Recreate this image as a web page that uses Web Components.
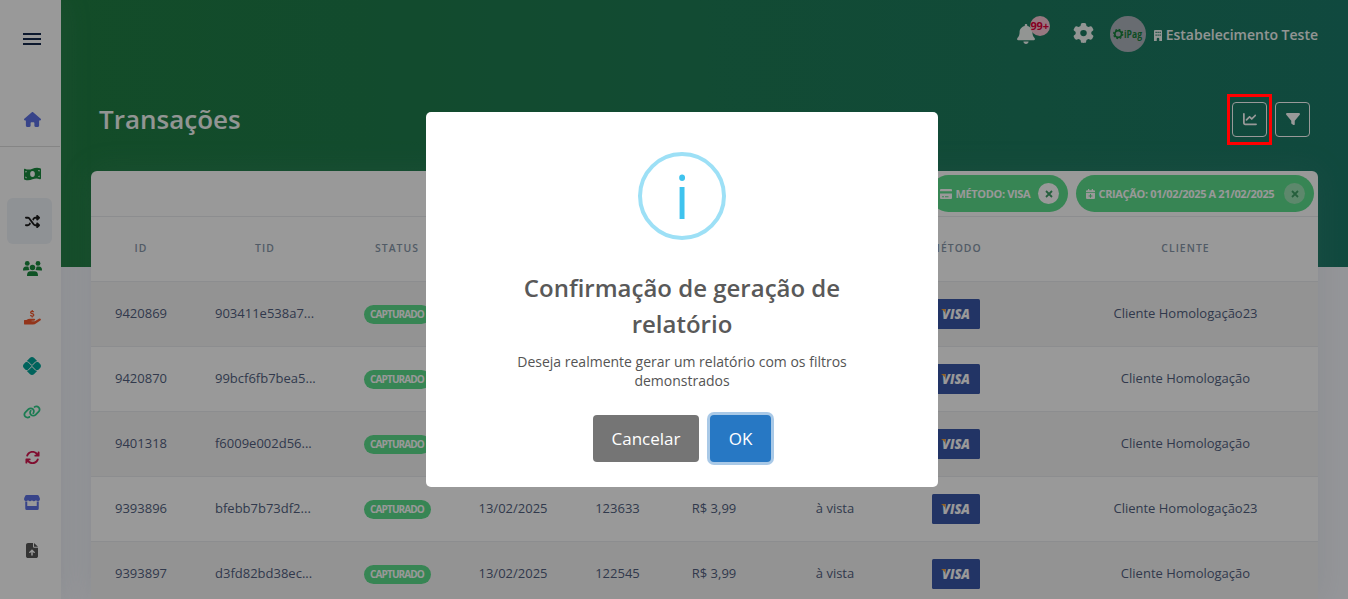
<!DOCTYPE html>
<html lang="pt-BR">
<head>
<meta charset="utf-8">
<title>Transações</title>
<style>
  html, body {
    margin: 0;
    height: 100%;
    overflow: hidden;
  }
  body {
    font-family: "Open Sans", "Noto Sans", sans-serif;
    font-size: 14px;
    color: #525f7f;
    background: #f8f9fe;
  }
</style>
</head>
<body>
<transactions-page></transactions-page>

<script>
const ICONS = {
  menu: ['0 0 18 12', '<path d="M0 0h18v2H0zM0 5h18v2H0zM0 10h18v2H0z"/>'],
  home: ['0 0 576 512', '<path d="M575.8 255.5c0 18-15 32.1-32 32.1h-32l.7 160.2c0 2.7-.2 5.4-.5 8.1V472c0 22.1-17.9 40-40 40H456c-1.1 0-2.2 0-3.3-.1c-1.4 .1-2.8 .1-4.2 .1H416 392c-22.1 0-40-17.9-40-40V448 384c0-17.7-14.3-32-32-32H256c-17.7 0-32 14.3-32 32v64 24c0 22.1-17.9 40-40 40H160 128.1c-1.5 0-3-.1-4.5-.2c-1.2 .1-2.4 .2-3.6 .2H104c-22.1 0-40-17.9-40-40V360c0-.9 0-1.9 .1-2.8V287.6H32c-18 0-32-14-32-32.1c0-9 3-17 10-24L266.4 8c7-7 15-8 22-8s15 2 21 7L564.8 231.5c8 7 12 15 11 24z"/>'],
  money: ['0 0 36 28', '<path fill-rule="evenodd" d="M2 3.500C8 6.500 13 5 18 3.300S28 .5 34.500 2.500Q36 3 36 4.500V22.500Q36 25 33.500 24.500C28 22.500 23 23 18 24.700S8 27.500 1.500 25.500Q0 25 0 23.500V5Q0 2.700 2 3.500ZM18 8a5 6 0 1 0 0 12a5 6 0 1 0 0-12ZM3 8V11Q6 11 6 8.300ZM3 22V19Q5.500 19 6 22.500ZM33 6V9Q30 9 30 6ZM33 20.500V17Q30.500 17 30 20.200Z"/>'],
  shuffle: ['0 0 512 512', '<path d="M403.8 34.4c12-5 25.700-2.200 34.900 6.900l64 64c6 6 9.400 14.100 9.400 22.600s-3.400 16.600-9.400 22.600l-64 64c-9.200 9.200-22.900 11.900-34.900 6.900s-19.800-16.600-19.800-29.600V160H352c-10.100 0-19.600 4.700-25.600 12.800L284 229.300 244 176l31.200-41.600C293.300 110.200 321.800 96 352 96h32V64c0-12.900 7.800-24.600 19.800-29.600zM164 282.700L204 336l-31.200 41.600C154.700 401.800 126.200 416 96 416H32c-17.700 0-32-14.300-32-32s14.300-32 32-32H96c10.100 0 19.600-4.700 25.600-12.800L164 282.700zm274.600 188c-9.200 9.200-22.900 11.900-34.900 6.900s-19.800-16.600-19.800-29.600V416H352c-30.200 0-58.700-14.200-76.800-38.400L121.600 172.800c-6-8.100-15.500-12.800-25.600-12.800H32c-17.700 0-32-14.300-32-32s14.300-32 32-32H96c30.200 0 58.700 14.200 76.800 38.400L326.400 339.200c6 8.100 15.500 12.800 25.600 12.800h32V320c0-12.900 7.800-24.600 19.800-29.600s25.700-2.200 34.900 6.900l64 64c6 6 9.400 14.100 9.400 22.600s-3.400 16.600-9.400 22.600l-64 64z"/>'],
  users: ['0 0 38 30', '<circle cx="8.500" cy="4.800" r="4.800"/><circle cx="30" cy="4.800" r="4.800"/><circle cx="19" cy="13" r="5.500"/><path d="M0 18Q0 11 6 11H9.500Q11.500 11 11.300 13Q11.500 15.500 13 17.500Q12 19 0 18.800ZM38 18Q38 11 32 11H28.500Q26.500 11 26.700 13Q26.500 15.500 25 17.500Q26 19 38 18.800ZM8 29Q8 20.500 15 20.500H23Q30 20.500 30 29Q30 30 29 30H9Q8 30 8 29Z"/>'],
  hand: ['0 0 36 32', '<path d="M21 4.500C20 2.500 14.500 2 14.500 5.200C14.500 8.500 21.300 6.800 21.300 10.500C21.300 13.800 15.500 13.500 14 11M17.900 0V3M17.900 13V16" transform="translate(-.5 0)" fill="none" stroke="currentColor" stroke-width="2.600"/><path d="M0 22.500Q0 21.500 1 21.500H5Q9 18.500 13 18.500H21.500Q24 18.800 23.600 21Q23 22.800 20.500 22.800H16V24H23L31.500 18.500Q34 17.300 35.500 19Q36.500 21 34.500 22.500L26 28.500Q23 31 19 31H1Q0 31 0 30Z"/>'],
  pix: ['0 0 512 512', '<path d="M242.400 292.500C247.800 287.100 257.100 287.100 262.500 292.500L339.500 369.500C353.700 383.700 372.600 391.500 392.600 391.500H407.700L310.600 488.600C280.300 518.100 231.100 518.100 200.800 488.600L103.300 391.200H112.600C132.600 391.200 151.500 383.400 165.700 369.200L242.400 292.500zM262.500 218.900C256.100 224.400 247.900 224.500 242.400 218.900L165.700 142.200C151.500 127.100 132.600 120.200 112.600 120.200H103.300L200.700 22.800C231.100-7.600 280.300-7.600 310.600 22.800L407.800 119.900H392.600C372.600 119.900 353.700 127.700 339.500 141.900L262.500 218.900zM112.600 142.700C126.400 142.700 139.100 148.300 149.700 158.100L226.400 234.800C233.600 241.100 243 245.600 252.500 245.600C261.900 245.600 271.300 241.100 278.500 234.800L355.500 157.800C365.300 148.100 378.800 142.500 392.600 142.500H430.300L488.600 200.800C518.900 231.100 518.900 280.300 488.600 310.600L430.300 368.900H392.600C378.800 368.900 365.300 363.300 355.500 353.500L278.500 276.500C264.600 262.600 240.300 262.600 226.400 276.600L149.700 353.200C139.100 363 126.400 368.600 112.600 368.600H80.800L22.800 310.600C-7.600 280.300-7.600 231.100 22.800 200.800L80.800 142.700H112.600z"/>'],
  link: ['0 0 640 512', '<path d="M579.8 267.700c56.500-56.500 56.500-148 0-204.500c-50-50-128.800-56.500-186.300-15.400l-1.600 1.100c-14.400 10.300-17.700 30.300-7.400 44.600s30.300 17.700 44.600 7.400l1.600-1.100c32.100-22.900 76-19.300 103.800 8.600c31.500 31.500 31.500 82.500 0 114L422.300 334.800c-31.500 31.500-82.500 31.500-114 0c-27.900-27.900-31.500-71.800-8.600-103.800l1.100-1.600c10.300-14.400 6.900-34.400-7.400-44.600s-34.400-6.900-44.600 7.400l-1.100 1.600C206.500 251.200 213 330 263 380c56.500 56.500 148 56.500 204.500 0L579.800 267.700zM60.200 244.300c-56.500 56.500-56.500 148 0 204.500c50 50 128.800 56.500 186.300 15.400l1.600-1.100c14.400-10.300 17.700-30.300 7.400-44.600s-30.300-17.700-44.600-7.400l-1.600 1.100c-32.100 22.900-76 19.300-103.800-8.600C74 372 74 321 105.500 289.500L217.700 177.200c31.500-31.500 82.500-31.500 114 0c27.900 27.900 31.500 71.800 8.600 103.900l-1.100 1.600c-10.300 14.400-6.900 34.400 7.400 44.600s34.400 6.900 44.600-7.400l1.100-1.600C433.500 260.800 427 182 377 132c-56.500-56.500-148-56.500-204.500 0L60.200 244.300z"/>'],
  rotate: ['0 0 512 512', '<path d="M105.100 202.600c7.700-21.800 20.200-42.300 37.800-59.800c62.500-62.500 163.800-62.500 226.300 0L386.300 160H352c-17.700 0-32 14.300-32 32s14.300 32 32 32H463.900c17.700 0 32-14.300 32-32V80c0-17.700-14.300-32-32-32s-32 14.300-32 32v35.200L414.400 97.600c-87.500-87.500-229.300-87.500-316.800 0C73.200 122 55.600 150.700 44.800 181.400c-5.900 16.700 2.900 34.900 19.500 40.800s34.900-2.900 40.800-19.500zM39 289.300c-5 1.500-9.800 4.200-13.700 8.200c-4 4-6.700 8.800-8.100 14c-.3 1.200-.6 2.500-.8 3.800c-.3 1.700-.4 3.400-.4 5.100V432c0 17.700 14.300 32 32 32s32-14.300 32-32V396.900l17.600 17.500c87.500 87.400 229.300 87.400 316.700 0c24.400-24.400 42.100-53.100 52.900-83.700c5.900-16.700-2.900-34.900-19.500-40.800s-34.900 2.900-40.800 19.500c-7.700 21.800-20.200 42.300-37.800 59.800c-62.500 62.500-163.800 62.500-226.300 0L125.600 352H160c17.700 0 32-14.300 32-32s-14.300-32-32-32H48.400c-1.600 0-3.200 .1-4.800 .3s-3.100 .5-4.600 1z"/>'],
  store: ['0 0 32 30', '<path d="M5 0H27Q28.500 0 29.200 1.200L31.500 6Q33 11 28.500 12Q25.500 12.500 23.800 10.500Q22 12.500 19.800 12.500T16 10.500Q14 12.500 12 12.500T8.200 10.500Q6.500 12.500 3.500 12Q-1 11 .5 6L2.800 1.200Q3.500 0 5 0Z"/><path d="M2.500 12.500Q5 13.500 6.500 13V22H25.500V13Q27.500 13.500 29.500 12.500V27Q29.500 30 26.500 30H5.500Q2.500 30 2.500 27Z"/>'],
  file: ['0 0 384 512', '<path d="M64 0C28.700 0 0 28.700 0 64V448c0 35.300 28.700 64 64 64H320c35.300 0 64-28.700 64-64V160H256c-17.700 0-32-14.300-32-32V0H64zM256 0V128H384L256 0zM216 408c0 13.300-10.700 24-24 24s-24-10.700-24-24V305.900l-31 31c-9.400 9.400-24.600 9.400-33.900 0s-9.400-24.600 0-33.900l72-72c9.400-9.400 24.600-9.400 33.900 0l72 72c9.400 9.400 9.400 24.600 0 33.900s-24.600 9.400-33.900 0l-31-31V408z"/>'],
  bell: ['0 0 448 512', '<path d="M224 0c-17.700 0-32 14.300-32 32V51.200C119 66 64 130.600 64 208v18.800c0 47-17.300 92.400-48.500 127.600l-7.400 8.300c-8.400 9.400-10.400 22.900-5.300 34.400S19.400 416 32 416H416c12.600 0 24-7.400 29.200-18.900s3.100-25-5.300-34.400l-7.400-8.300C401.300 319.200 384 273.900 384 226.800V208c0-77.400-55-142-128-156.800V32c0-17.700-14.300-32-32-32zm45.300 493.300c12-12 18.700-28.300 18.700-45.300H224 160c0 17 6.700 33.300 18.700 45.300s28.300 18.700 45.300 18.700s33.300-6.700 45.300-18.700z"/>'],
  gear: ['0 0 512 512', '<path d="M495.900 166.600c3.200 8.700 .5 18.400-6.400 24.600l-43.300 39.400c1.100 8.300 1.700 16.800 1.700 25.400s-.6 17.100-1.700 25.400l43.300 39.400c6.900 6.200 9.600 15.900 6.400 24.600c-4.400 11.900-9.700 23.300-15.800 34.300l-4.700 8.100c-6.600 11-14 21.400-22.100 31.200c-5.900 7.200-15.700 9.600-24.500 6.800l-55.700-17.700c-13.400 10.300-28.200 18.900-44 25.400l-12.500 57.100c-2 9.100-9 16.300-18.200 17.800c-13.800 2.300-28 3.500-42.500 3.500s-28.700-1.200-42.500-3.500c-9.200-1.500-16.200-8.700-18.200-17.800l-12.500-57.100c-15.800-6.500-30.600-15.100-44-25.400L83.100 425.900c-8.800 2.800-18.600 .3-24.500-6.800c-8.100-9.800-15.500-20.200-22.100-31.200l-4.700-8.100c-6.100-11-11.400-22.400-15.800-34.300c-3.200-8.700-.5-18.400 6.400-24.600l43.300-39.400C64.600 273.100 64 264.600 64 256s.6-17.100 1.700-25.400L22.400 191.200c-6.900-6.200-9.600-15.900-6.400-24.600c4.400-11.900 9.700-23.300 15.800-34.300l4.700-8.100c6.600-11 14-21.400 22.100-31.200c5.900-7.200 15.700-9.600 24.500-6.800l55.700 17.700c13.400-10.300 28.200-18.900 44-25.400l12.500-57.100c2-9.100 9-16.300 18.200-17.800C227.300 1.200 241.500 0 256 0s28.700 1.200 42.500 3.500c9.200 1.500 16.200 8.700 18.200 17.800l12.500 57.100c15.800 6.500 30.600 15.100 44 25.400l55.700-17.700c8.800-2.800 18.600-.3 24.500 6.800c8.100 9.800 15.500 20.200 22.100 31.200l4.700 8.100c6.100 11 11.400 22.400 15.800 34.300zM256 336a80 80 0 1 0 0-160 80 80 0 1 0 0 160z"/>'],
  building: ['0 0 16 22', '<path fill-rule="evenodd" d="M2 0H14Q16 0 16 2V22H10.500V17.500Q10.500 15.500 8 15.500T5.500 17.500V22H0V2Q0 0 2 0ZM3 3.500V6H5.500V3.500ZM7 3.500V6H9.500V3.500ZM11 3.500V6H13.500V3.500ZM3 9V11.500H5.500V9ZM7 9V11.500H9.500V9ZM11 9V11.500H13.500V9Z"/>'],
  chart: ['0 0 512 512', '<path d="M64 64c0-17.700-14.300-32-32-32S0 46.300 0 64V400c0 44.200 35.800 80 80 80H480c17.700 0 32-14.300 32-32s-14.300-32-32-32H80c-8.800 0-16-7.200-16-16V64zm406.600 86.600c12.500-12.500 12.500-32.800 0-45.300s-32.800-12.500-45.300 0L320 210.700l-57.400-57.400c-12.500-12.500-32.800-12.500-45.300 0l-112 112c-12.500 12.500-12.500 32.800 0 45.300s32.800 12.500 45.300 0L240 221.300l57.400 57.400c12.500 12.500 32.800 12.500 45.300 0l128-128z"/>'],
  filter: ['0 0 512 512', '<path d="M3.900 54.900C10.500 40.900 24.500 32 40 32H472c15.500 0 29.500 8.900 36.100 22.900s4.600 30.500-5.200 42.500L320 320.900V448c0 12.100-6.800 23.200-17.700 28.600s-23.800 4.300-33.500-3l-64-48c-8.100-6-12.800-15.500-12.800-25.600V320.900L9 97.300C-.7 85.400-2.800 68.800 3.900 54.900z"/>'],
  card: ['0 0 24 18', '<path fill-rule="evenodd" d="M2 0H22Q24 0 24 2V4H0V2Q0 0 2 0ZM0 8H24V16Q24 18 22 18H2Q0 18 0 16ZM4 13V15H8V13ZM10 13V15H17V13Z"/>'],
  calendar: ['0 0 18 20', '<path fill-rule="evenodd" d="M4 0H6.500V2.500H11.500V0H14V2.500H16Q18 2.500 18 4.500V6.500H0V4.500Q0 2.500 2 2.500H4ZM0 8H18V18Q18 20 16 20H2Q0 20 0 18ZM8 10V12.800H5.200V14.800H8V17.600H10V14.800H12.800V12.800H10V10Z"/>'],
  close: ['0 0 8 8', '<path d="M1 1L7 7M7 1L1 7" fill="none" stroke="currentColor" stroke-width="1.800"/>']
};

class UiIcon extends HTMLElement {
  connectedCallback() {
    const [viewBox, shape] = ICONS[this.getAttribute('name')];
    const w = this.getAttribute('w');
    const h = this.getAttribute('h');
    this.attachShadow({ mode: 'open' });
    this.shadowRoot.innerHTML = `
      <style>
        :host { display: inline-flex; flex: none; }
        svg { display: block; fill: currentColor; overflow: visible; }
      </style>
      <svg width="${w}" height="${h}" viewBox="${viewBox}" preserveAspectRatio="none">${shape}</svg>
    `;
  }
}

class SideNav extends HTMLElement {
  connectedCallback() {
    this.attachShadow({ mode: 'open' });
    this.shadowRoot.innerHTML = `
      <style>
        :host {
          display: flex;
          flex-direction: column;
          box-sizing: border-box;
          height: 599px;
          background: #fff;
          padding-left: 7px;
          width: 61px;
          box-shadow: 0 0 32px rgba(136, 152, 170, .15);
          position: relative;
          z-index: 1;
        }
        .item {
          flex: none;
          width: 45px;
          height: 46px;
          border-radius: 6px;
          display: flex;
          align-items: center;
          justify-content: center;
          padding-left: 5px;
          box-sizing: border-box;
        }
        .menu { margin-top: 16px; color: #172b4d; }
        .home { margin-top: 34px; color: #5e72e4; }
        hr { border: 0; height: 1px; background: #dedede; margin: 4px 0 4px -7px; width: 60px; flex: none; }
        .active { background: #eff3f8; margin-top: 1px; color: #1c1c1c; }
      </style>
      <div class="item menu"><ui-icon name="menu" w="18" h="12"></ui-icon></div>
      <div class="item home"><ui-icon name="home" w="17" h="15"></ui-icon></div>
      <hr>
      <div class="item" style="color:#1a8a3f"><ui-icon name="money" w="17" h="14"></ui-icon></div>
      <div class="item active"><ui-icon name="shuffle" w="15" h="15"></ui-icon></div>
      <div class="item" style="color:#1a8a3f;margin-top:1px"><ui-icon name="users" w="19" h="15"></ui-icon></div>
      <div class="item" style="color:#f5592d;margin-top:3px"><ui-icon name="hand" w="17" h="15"></ui-icon></div>
      <div class="item" style="color:#00a599;margin-top:3px"><ui-icon name="pix" w="18" h="18"></ui-icon></div>
      <div class="item" style="color:#2dce89"><ui-icon name="link" w="18" h="14"></ui-icon></div>
      <div class="item" style="color:#d6164f;margin-top:-1px"><ui-icon name="rotate" w="15" h="15"></ui-icon></div>
      <div class="item" style="color:#5e72e4;margin-top:-1px"><ui-icon name="store" w="16" h="15"></ui-icon></div>
      <div class="item" style="color:#585858;margin-top:2px"><ui-icon name="file" w="12" h="15"></ui-icon></div>
    `;
  }
}

class TopBar extends HTMLElement {
  connectedCallback() {
    this.attachShadow({ mode: 'open' });
    this.shadowRoot.innerHTML = `
      <style>
        :host {
          display: flex;
          justify-content: flex-end;
          align-items: center;
          height: 69px;
          color: #fff;
        }
        .bell { position: relative; margin: -1px 38px 0 0; display: flex; color: #f4f8f6; }
        .badge {
          position: absolute;
          left: 13px;
          top: -8px;
          width: 20px;
          height: 20px;
          border-radius: 50%;
          background: #fbc9d5;
          color: #e0003a;
          font-size: 11px;
          font-weight: 700;
          line-height: 20px;
          letter-spacing: -.2px;
          display: flex;
          justify-content: center;
        }
        .gear { color: #f4f8f6; margin-right: 16px; margin-top: -3px; }
        .avatar {
          width: 36px;
          height: 36px;
          margin: -1px 8px 0 0;
        }
        .name { font-weight: 600; font-size: 14px; margin-left: 4px; color: #f4f8f6; }
        .building { margin-top: 2px; color: #f4f8f6; }
      </style>
      <div class="bell"><ui-icon name="bell" w="18" h="20"></ui-icon><span class="badge">99+</span></div>
      <ui-icon class="gear" name="gear" w="21" h="20"></ui-icon>
      <svg class="avatar" viewBox="0 0 36 36">
        <circle cx="18" cy="18" r="18" fill="#adb5bd"/>
        <circle cx="8.200" cy="18" r="3.400" fill="none" stroke="#14803a" stroke-width="1.800"/>
        <circle cx="8.200" cy="18" r="4.600" fill="none" stroke="#14803a" stroke-width="1.200" stroke-dasharray="1.800"/>
        <text x="14" y="21.500" font-size="10" font-weight="700" textLength="18" lengthAdjust="spacingAndGlyphs" fill="#14803a">iPag</text>
      </svg>
      <ui-icon class="building" name="building" w="8" h="11"></ui-icon>
      <span class="name">Estabelecimento Teste</span>
    `;
  }
}

class FilterChip extends HTMLElement {
  connectedCallback() {
    this.attachShadow({ mode: 'open' });
    this.shadowRoot.innerHTML = `
      <style>
        :host {
          display: flex;
          align-items: center;
          box-sizing: border-box;
          width: var(--chip-width);
          height: 37px;
          border-radius: 19px;
          background: #5cde8c;
          color: #fff;
          padding: 0 9px 0 10px;
          font-size: 11px;
          font-weight: 700;
          letter-spacing: -.35px;
          white-space: nowrap;
        }
        .text { margin-left: 3.5px; flex: 1; }
        .close {
          width: 21px;
          height: 21px;
          border-radius: 50%;
          display: flex;
          align-items: center;
          justify-content: center;
          background: var(--close-bg, #fff);
          color: #3f9f66;
        }
      </style>
      <ui-icon name="${this.getAttribute('icon')}" w="${this.getAttribute('icon-width')}" h="10"></ui-icon>
      <span class="text"><slot></slot></span>
      <span class="close"><ui-icon name="close" w="8" h="8"></ui-icon></span>
    `;
  }
}

class TransactionTable extends HTMLElement {
  connectedCallback() {
    const headers = ['ID', 'TID', 'STATUS', '', '', '', '', 'MÉTODO', 'CLIENTE'];
    const rows = [
      ['9420869', '903411e538a7...', '', '', '', '', 'Cliente Homologação23'],
      ['9420870', '99bcf6fb7bea5...', '', '', '', '', 'Cliente Homologação'],
      ['9401318', 'f6009e002d56...', '', '', '', '', 'Cliente Homologação'],
      ['9393896', 'bfebb7b73df2...', '13/02/2025', '123633', 'R$ 3,99', 'à vista', 'Cliente Homologação23'],
      ['9393897', 'd3fd82bd38ec...', '13/02/2025', '122545', 'R$ 3,99', 'à vista', 'Cliente Homologação']
    ];
    const visa = `
      <svg width="48" height="30" viewBox="0 0 48 30">
        <rect width="48" height="30" rx="1.500" fill="#3957a8"/>
        <text x="10" y="19.700" font-size="13.200" font-weight="800" font-style="italic" textLength="28" lengthAdjust="spacingAndGlyphs" fill="#fff">VISA</text>
        <path d="M9 10H13L14 15Q12.500 11.500 9 10Z" fill="#f0a030"/>
      </svg>`;
    this.attachShadow({ mode: 'open' });
    this.shadowRoot.innerHTML = `
      <style>
        :host {
          display: block;
          height: 428px;
          overflow: hidden;
          background: #fff;
          border-radius: 6px 6px 0 0;
          box-shadow: 0 0 32px rgba(136, 152, 170, .15);
        }
        .filters {
          box-sizing: border-box;
          height: 46px;
          padding: 4px 4px 0;
          display: flex;
          justify-content: flex-end;
          gap: 8px;
          border-bottom: 1px solid #e9ecef;
        }
        .row {
          display: grid;
          grid-template-columns: 100px 148px 116px 116px 93px 100px 142px 100px 359px;
          width: 1274px;
          height: 65px;
          box-sizing: border-box;
          border-bottom: 1px solid #e9ecef;
          align-items: center;
          justify-items: center;
          font-size: 13px;
        }
        .row span { margin-top: -2px; }
        .stripe { background: #f6f6f6; }
        .row .tid { justify-self: start; margin-left: 24px; }
        .head {
          font-size: 10.4px;
          font-weight: 600;
          letter-spacing: 1.04px;
          color: #8898aa;
        }
        .row .badge {
          width: 67px;
          height: 19px;
          line-height: 18px;
          margin-top: 1px;
          text-align: center;
          border-radius: 10px;
          background: #5cde8c;
          color: #fff;
          font-size: 10px;
          font-weight: 700;
          letter-spacing: -.88px;
        }
        svg { display: block; }
      </style>
      <div class="filters"><slot></slot></div>
      <div class="row head">${headers.map(h => `<span>${h}</span>`).join('')}</div>
      ${rows.map(([id, tid, date, nsu, value, terms, client], i) => `
        <div class="row ${i % 2 ? '' : 'stripe'}">
          <span>${id}</span>
          <span class="tid">${tid}</span>
          <span class="badge">CAPTURADO</span>
          <span>${date}</span>
          <span>${nsu}</span>
          <span>${value}</span>
          <span>${terms}</span>
          ${visa}
          <span>${client}</span>
        </div>`).join('')}
    `;
  }
}

class ConfirmModal extends HTMLElement {
  connectedCallback() {
    this.attachShadow({ mode: 'open' });
    this.shadowRoot.innerHTML = `
      <style>
        :host {
          position: fixed;
          inset: 0;
          z-index: 10;
          display: flex;
          align-items: center;
          justify-content: center;
          padding-left: 16px;
          background: rgba(0, 0, 0, .4);
          box-sizing: border-box;
        }
        .popup {
          box-sizing: border-box;
          width: 512px;
          height: 375px;
          border-radius: 5px;
          background: #fff;
          color: #545454;
          display: flex;
          flex-direction: column;
          align-items: center;
          text-align: center;
          padding-top: 40px;
        }
        .icon {
          box-sizing: border-box;
          width: 88px;
          height: 88px;
          border: 4px solid #9de0f6;
          border-radius: 50%;
          color: #3fc3ee;
          font-size: 60px;
          line-height: 80px;
        }
        h2 {
          margin: 30px 0 0;
          width: 380px;
          font-size: 24px;
          line-height: 36px;
          font-weight: 600;
          color: #595959;
        }
        p { margin: 10px 0 0; width: 400px; font-size: 14px; line-height: 19px; }
        .actions { display: flex; gap: 11px; margin-top: 25px; }
        button {
          height: 47px;
          padding: 0;
          border: 0;
          border-radius: 4px;
          color: #fff;
          font: 500 17px "Open Sans", sans-serif;
        }
        .cancel { width: 106px; background: #757575; }
        .ok { width: 61px; background: #2778c4; box-shadow: 0 0 0 3px rgba(39, 120, 196, .4); }
      </style>
      <div class="popup">
        <div class="icon">i</div>
        <h2><slot name="title"></slot></h2>
        <p><slot></slot></p>
        <div class="actions">
          <button class="cancel">Cancelar</button>
          <button class="ok">OK</button>
        </div>
      </div>
    `;
  }
}

class TransactionsPage extends HTMLElement {
  connectedCallback() {
    this.attachShadow({ mode: 'open' });
    this.shadowRoot.innerHTML = `
      <style>
        :host { display: flex; height: 599px; position: relative; }
        main {
          flex: 1;
          min-width: 0;
          padding: 0 30px;
          background: linear-gradient(87deg, #207f43, #1c7b69) 0 0 / 100% 267px no-repeat;
        }
        .heading {
          height: 102px;
          display: flex;
          align-items: center;
          justify-content: space-between;
          padding: 0 8px 2px;
          box-sizing: border-box;
          color: #fff;
        }
        h1 { margin: 0; font-size: 26px; font-weight: 600; color: #f4f8f6; }
        .tools { display: flex; gap: 8px; }
        .tool {
          box-sizing: border-box;
          width: 35px;
          height: 35px;
          border: 1px solid #fff;
          border-radius: 4px;
          display: flex;
          align-items: center;
          justify-content: center;
        }
        .marker {
          position: absolute;
          left: 1227px;
          top: 94px;
          width: 45px;
          height: 51px;
          box-sizing: border-box;
          border: 3px solid #f00;
          z-index: 20;
        }
      </style>
      <side-nav></side-nav>
      <main>
        <top-bar></top-bar>
        <div class="heading">
          <h1>Transações</h1>
          <div class="tools">
            <span class="tool"><ui-icon name="chart" w="14" h="14"></ui-icon></span>
            <span class="tool"><ui-icon name="filter" w="14" h="14"></ui-icon></span>
          </div>
        </div>
        <transaction-table>
          <filter-chip icon="card" icon-width="12" style="--chip-width:138px">MÉTODO: VISA</filter-chip>
          <filter-chip icon="calendar" icon-width="9" style="--chip-width:238px;--close-bg:#9be3b4">CRIAÇÃO: 01/02/2025 A 21/02/2025</filter-chip>
        </transaction-table>
      </main>
      <confirm-modal>
        <span slot="title">Confirmação de geração de relatório</span>
        Deseja realmente gerar um relatório com os filtros demonstrados
      </confirm-modal>
      <div class="marker"></div>
    `;
  }
}

customElements.define('ui-icon', UiIcon);
customElements.define('side-nav', SideNav);
customElements.define('top-bar', TopBar);
customElements.define('filter-chip', FilterChip);
customElements.define('transaction-table', TransactionTable);
customElements.define('confirm-modal', ConfirmModal);
customElements.define('transactions-page', TransactionsPage);
</script>
</body>
</html>
